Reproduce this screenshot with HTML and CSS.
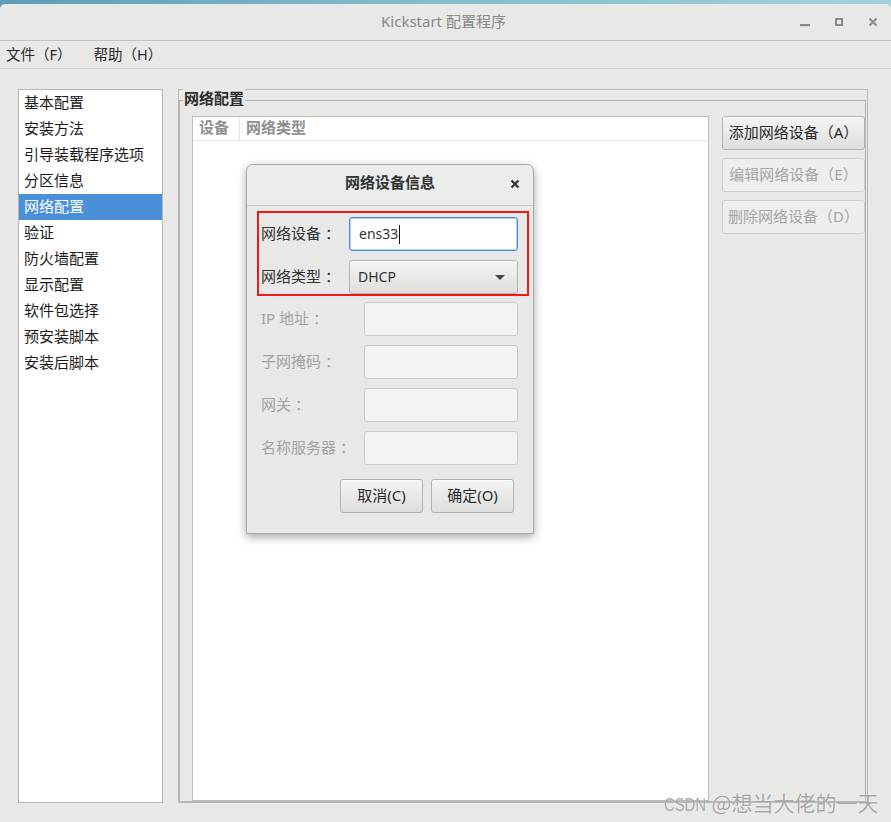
FILE: index.html
```html
<!DOCTYPE html>
<html lang="zh-CN">
<head>
<meta charset="utf-8">
<title>Kickstart 配置程序</title>
<link rel="stylesheet" href="styles.css">
</head>
<body>
<header class="titlebar">
  <div></div>
  <div class="title">Kickstart 配置程序</div>
  <div class="wm">
    <svg class="wm-icon" width="10" height="10" viewBox="0 0 10 10"><rect x="0" y="7" width="10" height="2.2" fill="#8a8a8a"/></svg>
    <svg class="wm-icon" width="10" height="10" viewBox="0 0 10 10"><rect x="2" y="2" width="6" height="6" fill="none" stroke="#8a8a8a" stroke-width="2"/></svg>
    <svg class="wm-icon" width="10" height="10" viewBox="0 0 10 10"><path d="M1.5 1.5 L8.5 8.5 M8.5 1.5 L1.5 8.5" stroke="#8a8a8a" stroke-width="1.9" fill="none"/></svg>
  </div>
</header>
<nav class="menubar">
  <span class="menu-item">文件（F）</span>
  <span class="menu-item">帮助（H）</span>
</nav>
<main class="main">
  <ul class="sidebar">
    <li>基本配置</li>
    <li>安装方法</li>
    <li>引导装载程序选项</li>
    <li>分区信息</li>
    <li class="selected">网络配置</li>
    <li>验证</li>
    <li>防火墙配置</li>
    <li>显示配置</li>
    <li>软件包选择</li>
    <li>预安装脚本</li>
    <li>安装后脚本</li>
  </ul>
  <section class="panel">
    <div class="frame">
      <div class="frame-label">网络配置</div>
      <div class="frame-body">
        <div class="tree">
          <div class="tree-head">
            <div class="col col-dev">设备</div>
            <div class="col col-type">网络类型</div>
          </div>
        </div>
        <div class="actions">
          <button class="btn">添加网络设备（A）</button>
          <button class="btn disabled">编辑网络设备（E）</button>
          <button class="btn disabled">删除网络设备（D）</button>
        </div>
      </div>
    </div>
  </section>
</main>

<div class="dialog">
  <div class="dlg-head">
    <div></div>
    <div class="dlg-title">网络设备信息</div>
    <div class="dlg-close"><svg width="10" height="10" viewBox="0 0 10 10"><path d="M1.5 1.5 L8.5 8.5 M8.5 1.5 L1.5 8.5" stroke="#2e3436" stroke-width="2.2" fill="none"/></svg></div>
  </div>
  <div class="dlg-body">
    <div class="highlight">
      <label class="lbl">网络设备 ：</label>
      <div class="entry focus"><span class="val">ens33</span><span class="caret"></span></div>
      <label class="lbl">网络类型 ：</label>
      <div class="combo"><span class="val">DHCP</span><svg width="10" height="5" viewBox="0 0 10 5"><path d="M0 0 L10 0 L5 5 Z" fill="#454545"/></svg></div>
    </div>
    <div class="fields">
      <label class="lbl dim">IP 地址 ：</label>
      <div class="entry off"></div>
      <label class="lbl dim">子网掩码 ：</label>
      <div class="entry off"></div>
      <label class="lbl dim">网关 ：</label>
      <div class="entry off"></div>
      <label class="lbl dim">名称服务器 ：</label>
      <div class="entry off"></div>
    </div>
    <div class="dlg-buttons">
      <button class="btn dbtn">取消(C)</button>
      <button class="btn dbtn">确定(O)</button>
    </div>
  </div>
</div>

<div class="watermark"><span class="wm-latin">CSDN</span> @想当大佬的一天</div>
</body>
</html>
```

FILE: styles.css
```css
* { box-sizing: border-box; }
html, body { margin: 0; padding: 0; }
body {
  width: 891px;
  height: 822px;
  overflow: hidden;
  position: relative;
  background: linear-gradient(90deg, #5e9db6 0%, #80bccb 45%, #a2d3da 100%) 0 0 / 100% 10px no-repeat, #e8e8e7;
  font-family: "Noto Sans", "Noto Sans CJK SC", sans-serif;
  font-size: 15px;
  color: #1f1f1f;
}

/* title bar */
.titlebar {
  margin-top: 4px;
  height: 37px;
  background: #e8e8e7;
  border-radius: 5px 5px 0 0;
  border-bottom: 1px solid #c4c4c2;
  display: grid;
  grid-template-columns: 1fr auto 1fr;
  align-items: center;
}
.title {
  color: #8a8a8a;
  font-size: 15px;
  line-height: 20px;
  margin-bottom: 2px;
  margin-right: 4px;
}
.wm {
  justify-self: end;
  display: flex;
  align-items: center;
  gap: 24px;
  padding-right: 13px;
}
.wm-icon { display: block; }

/* menu bar */
.menubar {
  height: 28px;
  border-bottom: 1px solid #d0d0ce;
  display: flex;
  align-items: center;
  padding-left: 6px;
  gap: 22px;
}
.menu-item {
  font-size: 14.5px;
  line-height: 20px;
  margin-bottom: 2px;
  color: #2a2a2a;
}

/* main area */
.main {
  display: flex;
  gap: 15px;
  padding: 20px 0 0 18px;
}
.sidebar {
  list-style: none;
  margin: 0;
  padding: 0;
  width: 145px;
  height: 714px;
  background: #fff;
  border: 1px solid #b6b6b4;
}
.sidebar li {
  height: 26px;
  line-height: 24px;
  padding-left: 5px;
  font-size: 15px;
  color: #1a1a1a;
  white-space: nowrap;
}
.sidebar li.selected {
  background: #4a90d9;
  color: #fff;
}

.panel {
  width: 690px;
  height: 714px;
  border: 1px solid #b9b9b7;
  padding-right: 1px;
  display: flex;
  flex-direction: column;
}
.frame {
  margin-top: 10px;
  flex: 1;
  border: 1px solid #b3b3b1;
  display: flex;
  flex-direction: column;
}
.frame-label {
  margin: -12px 0 0 3px;
  width: fit-content;
  padding: 0 1px;
  background: #e8e8e7;
  line-height: 18px;
  font-size: 15px;
  font-weight: 700;
  color: #2e2e2e;
}
.frame-body {
  flex: 1;
  display: flex;
  gap: 13px;
  padding: 9px 0 0 12px;
}
.tree {
  flex: 1;
  background: #fff;
  border: 1px solid #bdbdbb;
}
.tree-head {
  display: flex;
  height: 24px;
  border-bottom: 1px solid #e3e3e3;
}
.col {
  line-height: 21px;
  font-size: 15px;
  font-weight: 700;
  color: #8f8f8f;
}
.col-dev {
  width: 47px;
  padding-left: 6px;
  border-right: 1px solid #e3e3e3;
}
.col-type { padding-left: 6px; }

.actions {
  width: 143px;
  display: flex;
  flex-direction: column;
  gap: 8px;
}

.btn {
  height: 34px;
  border: 1px solid #b2b2b0;
  border-radius: 3px;
  background: linear-gradient(#f4f4f3, #dededc);
  box-shadow: inset 0 1px #ffffff;
  color: #2a2a2a;
  font-family: "Noto Sans", "Noto Sans CJK SC", sans-serif;
  font-size: 15px;
  line-height: 20px;
  padding: 0 0 3px 0;
  white-space: nowrap;
}
.btn.disabled {
  background: #eeeeed;
  border-color: #cfcfcd;
  box-shadow: none;
  color: #a6a6a6;
}

/* dialog */
.dialog {
  position: absolute;
  left: 246px;
  top: 164px;
  width: 288px;
  background: #e8e8e7;
  border: 1px solid #a8a8a6;
  border-radius: 7px 7px 0 0;
  box-shadow: 0 3px 10px rgba(0, 0, 0, 0.35);
}
.dlg-head {
  height: 41px;
  border-bottom: 1px solid #cbcbc9;
  border-radius: 7px 7px 0 0;
  background: #ececeb;
  display: grid;
  grid-template-columns: 1fr auto 1fr;
  align-items: center;
}
.dlg-title {
  font-size: 15px;
  font-weight: 700;
  line-height: 20px;
  margin-bottom: 7px;
  color: #2e3436;
}
.dlg-close {
  justify-self: end;
  padding-right: 13px;
  margin-bottom: 3px;
  display: flex;
}
.dlg-close svg { display: block; }

.dlg-body {
  padding: 5px 4px 20px 10px;
}
.highlight {
  border: 2px solid #f01818;
  padding: 4px 9px 0 2px;
  display: grid;
  grid-template-columns: 88px 169px;
  row-gap: 9px;
  align-items: center;
}
.lbl {
  font-size: 15px;
  line-height: 20px;
  margin-bottom: 2px;
  color: #2e3436;
  white-space: nowrap;
}
.lbl.dim { color: #a3a3a3; }

.entry {
  height: 34px;
  border-radius: 3px;
}
.entry.focus {
  background: #fff;
  border: 1px solid #4a90d9;
  box-shadow: inset 0 0 0 1px rgba(74, 144, 217, 0.45);
  display: flex;
  align-items: center;
  padding-left: 9px;
}
.val {
  font-family: "Noto Sans", sans-serif;
  font-size: 14px;
  line-height: 20px;
  color: #2e3436;
}
.caret {
  display: inline-block;
  width: 1px;
  height: 19px;
  background: #111;
  margin-left: 1px;
}
.combo {
  height: 34px;
  border: 1px solid #b2b2b0;
  border-radius: 3px;
  background: linear-gradient(#f4f4f3, #dededc);
  box-shadow: inset 0 1px #ffffff;
  display: flex;
  align-items: center;
  justify-content: space-between;
  padding: 0 12px 0 8px;
}
.combo svg { display: block; }

.entry.off {
  background: #f3f3f2;
  border: 1px solid #cbcbc9;
}

.fields {
  margin-top: 6px;
  padding-left: 4px;
  display: grid;
  grid-template-columns: 103px 154px;
  row-gap: 9px;
  align-items: center;
}

.dlg-buttons {
  margin-top: 14px;
  padding-right: 15px;
  display: flex;
  justify-content: flex-end;
  gap: 8px;
}
.dbtn { width: 83px; }

/* watermark */
.watermark {
  position: absolute;
  left: 664px;
  top: 789px;
  font-family: "Noto Sans CJK SC", sans-serif;
  font-size: 21px;
  line-height: 26px;
  color: rgba(120, 120, 120, 0.65);
  text-shadow: 0 0 1px rgba(255, 255, 255, 0.9);
  white-space: nowrap;
}
.wm-latin {
  display: inline-block;
  font-family: "Liberation Sans", sans-serif;
  font-size: 19px;
  transform: scaleX(0.78);
  transform-origin: 0 50%;
  margin-right: -11px;
}
```
